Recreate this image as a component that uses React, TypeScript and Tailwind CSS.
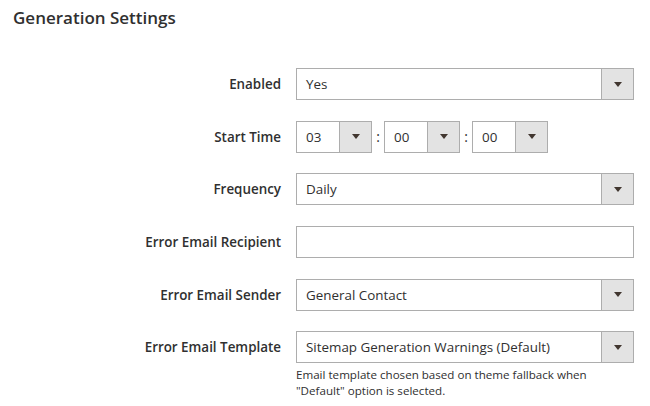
const font = { fontFamily: '"Open Sans", "Liberation Sans", sans-serif' };

function Arrow() {
  return (
    <svg width="8" height="5" viewBox="0 0 8 5" className="block">
      <path d="M0 0h8L4 5z" fill="#41362f" />
    </svg>
  );
}

function Select({ value, className = "w-[338px]" }: { value: string; className?: string }) {
  return (
    <div className={`flex h-[32px] border border-[#adadad] bg-white ${className}`}>
      <div className="flex-1 flex items-center pl-[9px] text-[13.4px] text-[#303030] whitespace-nowrap overflow-hidden">
        {value}
      </div>
      <div className="w-[32px] flex items-center justify-center bg-[#e3e3e3] border-l border-[#adadad]">
        <Arrow />
      </div>
    </div>
  );
}

function Row({ label, children }: { label: string; children: React.ReactNode }) {
  return (
    <div className="flex items-start">
      <div className="w-[282px] pr-[1px] h-[32px] flex items-center justify-end text-[13.4px] font-semibold text-[#303030]">
        {label}
      </div>
      <div className="ml-[14px]">{children}</div>
    </div>
  );
}

export default function App() {
  return (
    <div className="w-[650px] h-[406px] bg-white overflow-hidden" style={font}>
      <h2 className="pl-[13px] pt-[6px] text-[17px] leading-[24px] font-semibold text-[#303030]">
        Generation Settings
      </h2>
      <div className="mt-[38px] flex flex-col gap-[20.7px]">
        <Row label="Enabled">
          <Select value="Yes" />
        </Row>
        <Row label="Start Time">
          <div className="flex items-center">
            <Select value="03" className="w-[76px]" />
            <span className="w-[12px] text-center text-[14px] text-[#303030]">:</span>
            <Select value="00" className="w-[76px]" />
            <span className="w-[12px] text-center text-[14px] text-[#303030]">:</span>
            <Select value="00" className="w-[76px]" />
          </div>
        </Row>
        <Row label="Frequency">
          <Select value="Daily" />
        </Row>
        <Row label="Error Email Recipient">
          <div className="w-[338px] h-[32px] border border-[#adadad] bg-white" />
        </Row>
        <Row label="Error Email Sender">
          <Select value="General Contact" />
        </Row>
        <Row label="Error Email Template">
          <div className="w-[338px]">
            <Select value="Sitemap Generation Warnings (Default)" />
            <p className="mt-[4px] text-[11.6px] leading-[16px] text-[#303030]">
              Email template chosen based on theme fallback when "Default" option is selected.
            </p>
          </div>
        </Row>
      </div>
    </div>
  );
}
